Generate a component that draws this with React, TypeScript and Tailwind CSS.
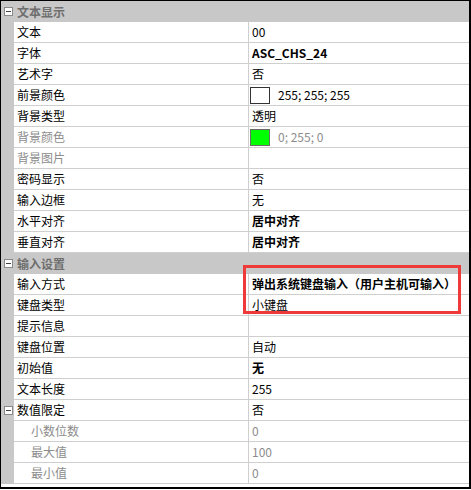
type Row = {
  label: string;
  value?: string;
  bold?: boolean;
  dim?: boolean;
  sub?: boolean;
  toggle?: boolean;
  swatch?: string;
};

const display: Row[] = [
  { label: "文本", value: "00" },
  { label: "字体", value: "ASC_CHS_24", bold: true },
  { label: "艺术字", value: "否" },
  { label: "前景颜色", value: "255; 255; 255", swatch: "bg-white border-[#333]" },
  { label: "背景类型", value: "透明" },
  { label: "背景颜色", value: "0; 255; 0", dim: true, swatch: "bg-[#00ff00] border-[#6b6b6b]" },
  { label: "背景图片", dim: true },
  { label: "密码显示", value: "否" },
  { label: "输入边框", value: "无" },
  { label: "水平对齐", value: "居中对齐", bold: true },
  { label: "垂直对齐", value: "居中对齐", bold: true },
];

const input: Row[] = [
  { label: "输入方式", value: "弹出系统键盘输入（用户主机可输入）", bold: true },
  { label: "键盘类型", value: "小键盘" },
  { label: "提示信息" },
  { label: "键盘位置", value: "自动" },
  { label: "初始值", value: "无", bold: true },
  { label: "文本长度", value: "255" },
  { label: "数值限定", value: "否", toggle: true },
  { label: "小数位数", value: "0", dim: true, sub: true },
  { label: "最大值", value: "100", dim: true, sub: true },
  { label: "最小值", value: "0", dim: true, sub: true },
];

function Minus() {
  return (
    <span className="flex h-[9px] w-[9px] items-center justify-center border border-[#8a8a8a] bg-white">
      <span className="h-px w-[5px] bg-[#444]" />
    </span>
  );
}

function Header({ title }: { title: string }) {
  return (
    <div className="flex h-[21px] items-center bg-[#c8c8c8]">
      <div className="flex w-[13px] justify-center pl-px">
        <Minus />
      </div>
      <span className="pl-[3px] font-bold text-[#6e6e6e]">{title}</span>
    </div>
  );
}

function PropRow({ row }: { row: Row }) {
  return (
    <div className="flex h-[21px]">
      <div className="flex w-[13px] items-center justify-center bg-[#c8c8c8] pl-px">
        {row.toggle && <Minus />}
      </div>
      <div className="flex flex-1 border-b border-[#cfcfcf] bg-white">
        <div
          className={`flex w-[235px] items-center border-r border-[#cfcfcf] ${
            row.sub ? "pl-[17px]" : "pl-[3px]"
          } ${row.dim ? "text-[#8c8c8c]" : "text-black"}`}
        >
          {row.label}
        </div>
        <div
          className={`flex flex-1 items-center pl-[3px] ${row.bold ? "font-bold" : ""} ${
            row.dim ? "text-[#8c8c8c]" : "text-black"
          }`}
        >
          {row.swatch && (
            <span className={`mr-[8px] ml-[-2px] h-[17px] w-[20px] border ${row.swatch}`} />
          )}
          {row.value}
        </div>
      </div>
    </div>
  );
}

export default function App() {
  return (
    <div
      className="relative h-[489px] w-[471px] border-t border-r-2 border-b-2 border-l border-black bg-white text-[12px] leading-none"
      style={{ fontFamily: '"Noto Sans CJK SC", "Noto Sans", sans-serif' }}
    >
      <Header title="文本显示" />
      {display.map((r) => (
        <PropRow key={r.label} row={r} />
      ))}
      <Header title="输入设置" />
      {input.map((r) => (
        <PropRow key={r.label} row={r} />
      ))}

      {/* 红框标注 */}
      <div className="absolute top-[264px] left-[242px] h-[49px] w-[218px] border-[3px] border-[#ef3a3a]" />
    </div>
  );
}
